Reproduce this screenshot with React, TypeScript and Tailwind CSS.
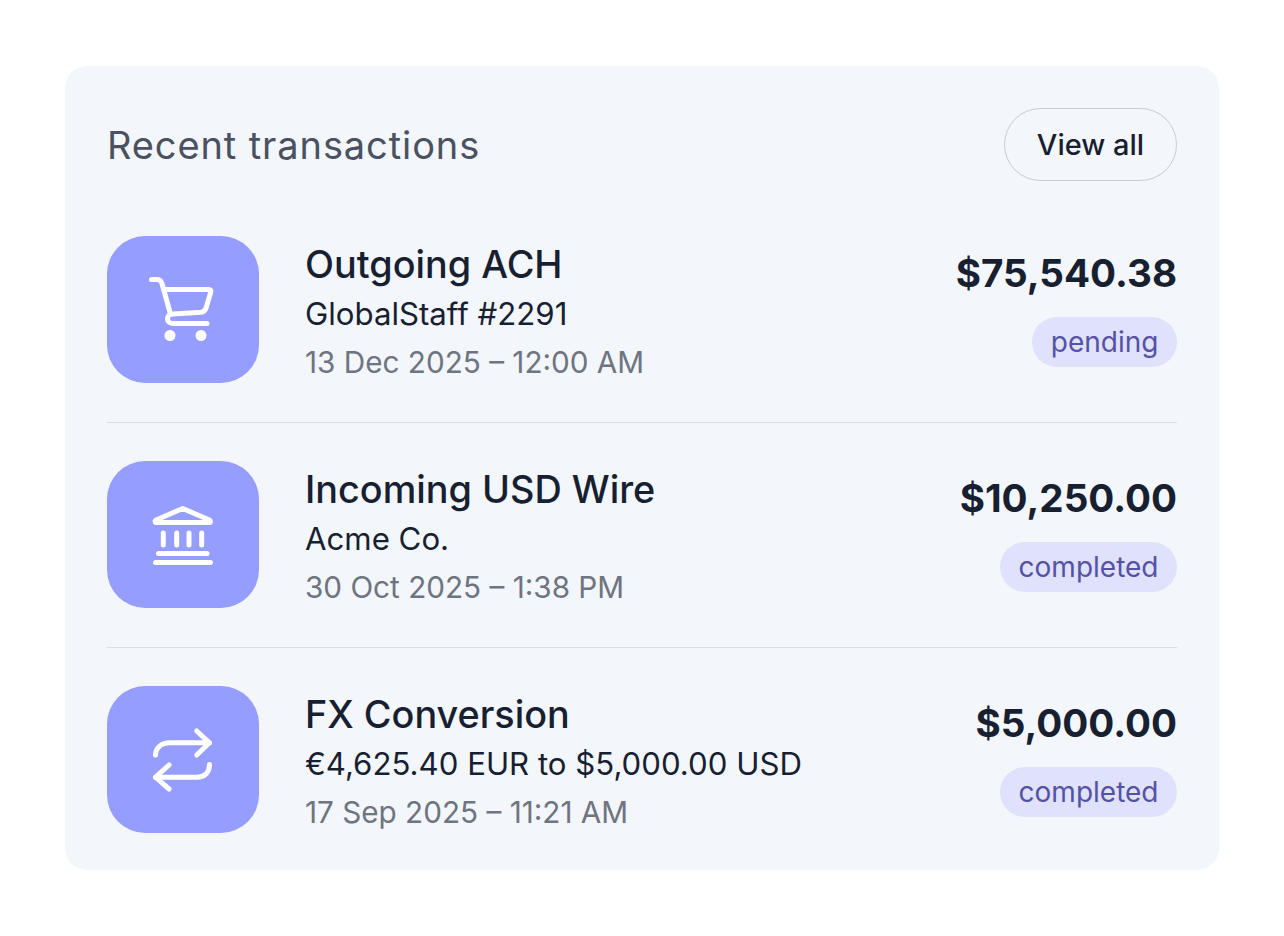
const font = { fontFamily: "Inter, sans-serif" };

function CartIcon() {
  return (
    <svg width="72" height="72" viewBox="0 0 72 72" fill="none" stroke="white" strokeWidth="5" strokeLinecap="round" strokeLinejoin="round">
      <path d="M4.500 5.500H10c2.500 0 4 1.200 4.800 3.500L23.500 40" />
      <path d="M18 15.500H62c1.500 0 2.300 1.200 1.800 2.500L59 34c-.8 2.600-2.500 4-5 4.300L26 40c-3.500 0-5.500 2.200-5.500 4.700 0 2.600 2 4.800 5 4.800H60" />
      <circle cx="23" cy="61.500" r="5.500" fill="white" stroke="none" />
      <circle cx="54" cy="61.500" r="5.500" fill="white" stroke="none" />
    </svg>
  );
}

function BankIcon() {
  return (
    <svg width="72" height="72" viewBox="0 0 72 72" fill="none" stroke="white" strokeWidth="5" strokeLinecap="round" strokeLinejoin="round">
      <path d="M35.700 9.500 9 21c-1.500.8-1 2.500.5 2.500H62c1.500 0 2-1.700.5-2.500z" />
      <path d="M16.300 34v12M29.700 34v12M42 34v12M54.700 34v12" />
      <path d="M11.500 54.500H60M8.500 63.500h55" />
    </svg>
  );
}

function SwapIcon() {
  return (
    <svg width="72" height="72" viewBox="0 0 72 72" fill="none" stroke="white" strokeWidth="5" strokeLinecap="round" strokeLinejoin="round">
      <path d="M49.700 7 62.500 18.800 49.700 31" />
      <path d="M62.500 18.800H23C14 18.800 8.500 24 8.500 31" />
      <path d="M22 41 8.500 53.200 22 65" />
      <path d="M8.500 53.200H49.700C58 53.200 62.500 48 62.500 40.500" />
    </svg>
  );
}

const rows = [
  { icon: <CartIcon />, title: "Outgoing ACH", sub: "GlobalStaff #2291", date: "13 Dec 2025 – 12:00 AM", amount: "$75,540.38", status: "pending" },
  { icon: <BankIcon />, title: "Incoming USD Wire", sub: "Acme Co.", date: "30 Oct 2025 – 1:38 PM", amount: "$10,250.00", status: "completed" },
  { icon: <SwapIcon />, title: "FX Conversion", sub: "€4,625.40 EUR to $5,000.00 USD", date: "17 Sep 2025 – 11:21 AM", amount: "$5,000.00", status: "completed" },
];

export default function App() {
  return (
    <div className="w-[1284px] h-[936px] bg-white pt-[66px] pl-[65px]" style={font}>
      <div className="w-[1154px] h-[804px] rounded-[22px] bg-[#f3f6fb] pt-[42px] pl-[42px] pr-[42px]">
        <div className="flex items-center justify-between h-[73px]">
          <h2 className="pt-[2px] text-[38px] tracking-[0.9px] font-normal text-[#4a5160]">Recent transactions</h2>
          <button className="w-[173px] h-[73px] rounded-full border-[1.5px] border-[#c9cbcf] text-[29px] font-medium text-[#171f31]">View all</button>
        </div>
        <div className="mt-[17px]">
          {rows.map((row, i) => (
            <div key={row.title} className={`flex items-start justify-between h-[225px] pt-[38px] ${i < 2 ? "border-b border-[#d9dfe5]" : ""}`}>
              <div className="flex items-start gap-[46px]">
                <div className="w-[152px] h-[147px] rounded-[38px] bg-[#959dff] flex items-center justify-center">{row.icon}</div>
                <div className="flex flex-col mt-[2px]">
                  <div className="text-[37.8px] leading-[52px] font-medium text-[#171f31]">{row.title}</div>
                  <div className="text-[31.2px] leading-[48px] text-[#171f31]">{row.sub}</div>
                  <div className="text-[29.7px] leading-[48px] text-[#6e7480]">{row.date}</div>
                </div>
              </div>
              <div className="flex flex-col items-end mt-[9px]">
                <div className="text-[38.6px] leading-[56px] font-bold text-[#171f31]">{row.amount}</div>
                <div className="mt-[16px] h-[50px] px-[18.5px] rounded-full bg-[#e0e1fb] text-[28px] leading-[50px] text-[#5552a6]">{row.status}</div>
              </div>
            </div>
          ))}
        </div>
      </div>
    </div>
  );
}
